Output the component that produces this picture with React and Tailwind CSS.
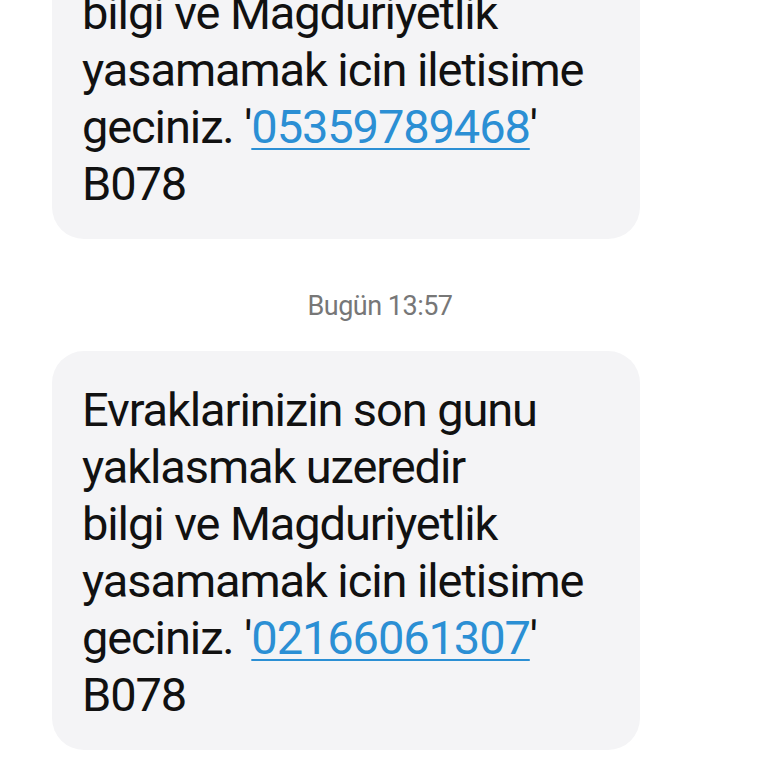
import React from 'react';

const Bubble = ({ phone }) => (
    <div className="ml-[52px] w-[588px] rounded-[32px] bg-[#f4f4f6] pl-[30px] pr-4 pt-[30px] pb-[27px] text-[47px] leading-[57px] tracking-[-1.1px] text-[#111]">
        <p>Evraklarinizin son gunu</p>
        <p>yaklasmak uzeredir</p>
        <p>bilgi ve Magduriyetlik</p>
        <p>yasamamak icin iletisime</p>
        <p>
            geciniz. '
            <span className="text-[#2b8fd4] underline decoration-2 underline-offset-[5px]">
                {phone}
            </span>
            '
        </p>
        <p>B078</p>
    </div>
);

export default function App() {
    return (
        <div
            className="h-[768px] w-[768px] overflow-hidden bg-white"
            style={{ fontFamily: 'Roboto, "Noto Sans", sans-serif' }}
        >
            <div className="-mt-[160px]">
                <Bubble phone="05359789468" />
                <div className="flex h-[112px] justify-center pt-[50px] pr-[8px] text-[27px] leading-[34px] tracking-[-0.5px] text-[#777]">
                    Bugün 13:57
                </div>
                <Bubble phone="02166061307" />
            </div>
        </div>
    );
}
